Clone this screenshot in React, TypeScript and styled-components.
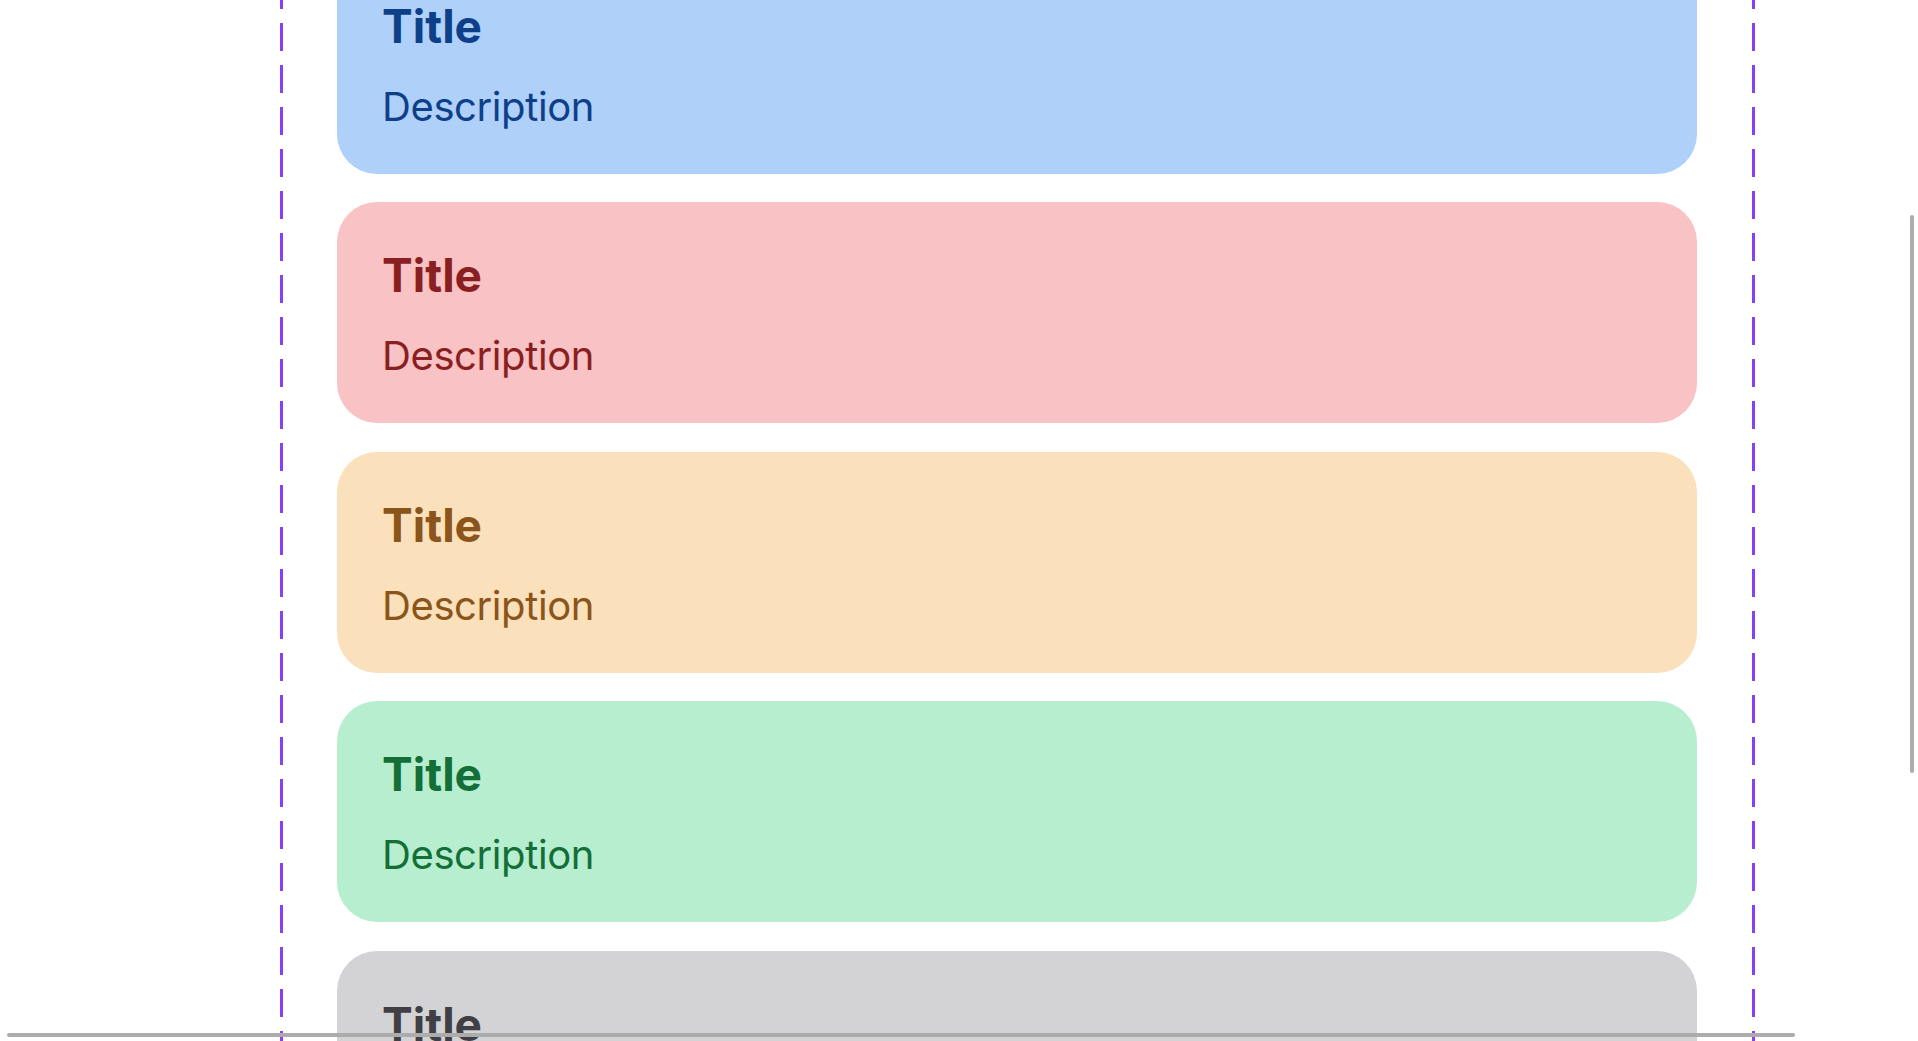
import * as React from "react";
import styled, { createGlobalStyle } from "styled-components";

const GlobalStyle = createGlobalStyle`
  html, body {
    margin: 0;
    padding: 0;
    background: #ffffff;
  }
  body {
    font-family: Inter, "Noto Sans", sans-serif;
  }
`;

type Tone = "violet" | "blue" | "red" | "amber" | "green" | "gray" | "slate";

const tones: Record<Tone, { bg: string; fg: string }> = {
  violet: { bg: "#ddd3fb", fg: "#4b1f9c" },
  blue: { bg: "#afd0f9", fg: "#0e4089" },
  red: { bg: "#f9c2c4", fg: "#8a1f22" },
  amber: { bg: "#fae0bb", fg: "#8a541a" },
  green: { bg: "#b8eed0", fg: "#136f37" },
  gray: { bg: "#d3d3d6", fg: "#3f3f45" },
  slate: { bg: "#cfd6df", fg: "#334155" },
};

const Page = styled.div`
  width: 2035px;
`;

// dashed guides on both sides of the column
const Frame = styled.div`
  width: 1475px;
  margin: 0 auto;
  box-sizing: border-box;
  padding: 107px 58px 121px 57px;
  display: flex;
  flex-direction: column;
  gap: 28.5px;
  background-image: linear-gradient(to bottom, #8b3ef8 28px, transparent 28px),
    linear-gradient(to bottom, #8b3ef8 28px, transparent 28px);
  background-size: 3px 42px, 3px 42px;
  background-position: left 0 top 7px, right 0 top 7px;
  background-repeat: repeat-y;
`;

const Card = styled.div<{ $tone: Tone }>`
  box-sizing: border-box;
  height: 221px;
  padding: 46px 45px 43px;
  border-radius: 40px;
  background: ${(p) => tones[p.$tone].bg};
  color: ${(p) => tones[p.$tone].fg};
  display: flex;
  flex-direction: column;
  gap: 30px;
`;

const Title = styled.div`
  font-size: 46px;
  line-height: 54px;
  font-weight: 700;
`;

const Description = styled.div`
  font-size: 40px;
  line-height: 48px;
  font-weight: 400;
  letter-spacing: -0.4px;
`;

// thin overlay scroll thumbs
const Thumb = styled.div<{ $axis: "x" | "y" }>`
  position: fixed;
  background: #acacac;
  border-radius: 2px;
  pointer-events: none;
  ${(p) =>
    p.$axis === "y"
      ? "right: 4px; top: 215px; width: 4px; height: 558px;"
      : "left: 7px; bottom: 4px; width: 1788px; height: 4px;"}
`;

const items: Tone[] = ["violet", "blue", "red", "amber", "green", "gray", "slate"];

export default function App() {
  React.useLayoutEffect(() => {
    window.scrollTo(0, 404);
  }, []);

  return (
    <>
      <GlobalStyle />
      <Page>
        <Frame>
          {items.map((tone) => (
            <Card key={tone} $tone={tone}>
              <Title>Title</Title>
              <Description>Description</Description>
            </Card>
          ))}
        </Frame>
      </Page>
      <Thumb $axis="y" />
      <Thumb $axis="x" />
    </>
  );
}
